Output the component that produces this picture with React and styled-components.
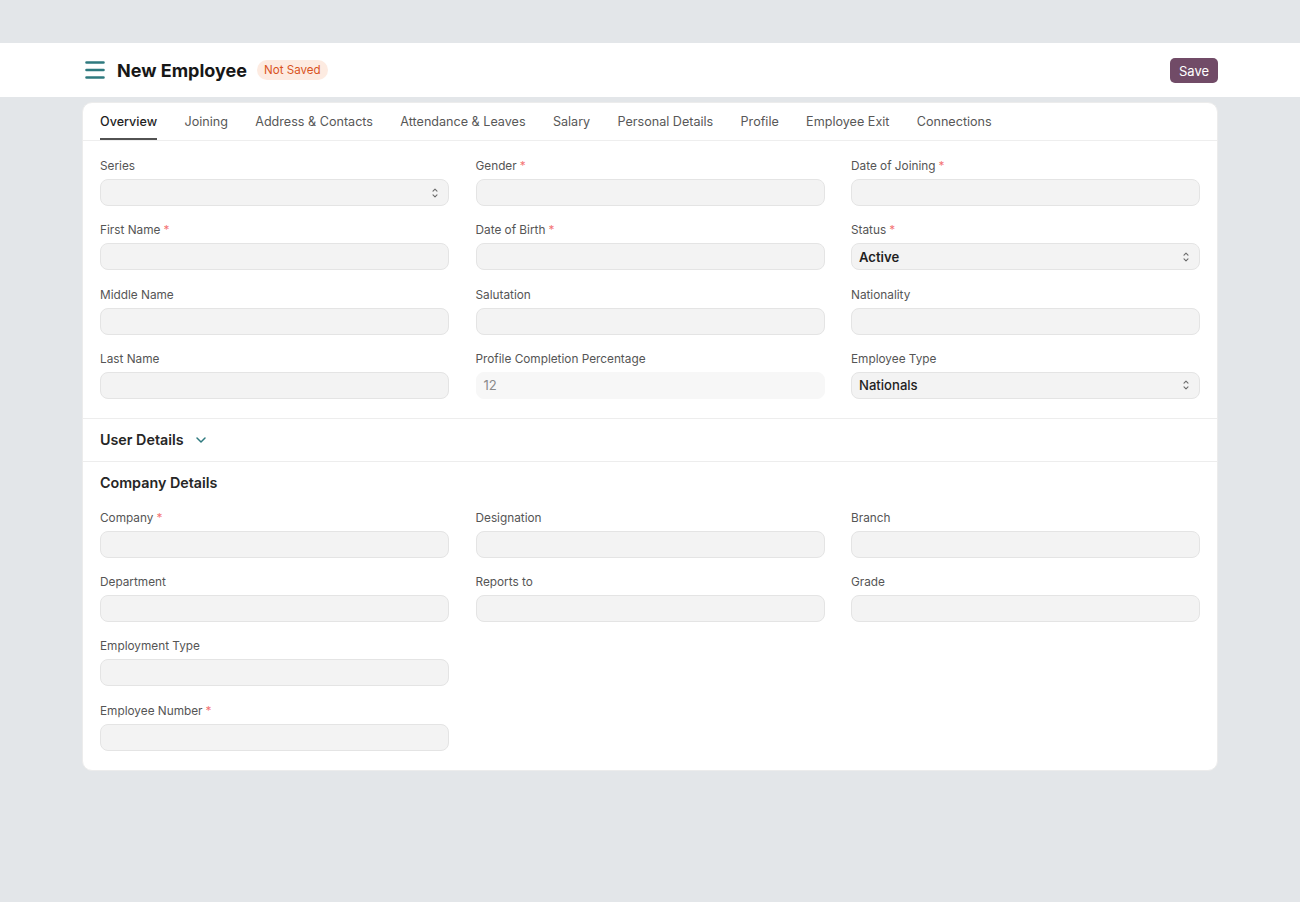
import styled, { createGlobalStyle } from "styled-components"

const GlobalStyle = createGlobalStyle`
  html, body {
    margin: 0;
    padding: 0;
    background: #e3e6e9;
    font-family: Inter, "Noto Sans", "Liberation Sans", sans-serif;
    -webkit-font-smoothing: antialiased;
  }
  * { box-sizing: border-box; }
`

const Page = styled.div`
  min-height: 902px;
  padding-top: 43px;
`

const HeaderBar = styled.header`
  background: #ffffff;
  height: 54px;
`

const Container = styled.div`
  width: 1136px;
  margin: 0 auto;
`

const HeaderInner = styled(Container)`
  height: 100%;
  display: flex;
  align-items: center;
  padding-left: 3px;
`

const MenuIcon = styled.svg`
  width: 20px;
  height: 20px;
  margin-right: 12px;
`

const Title = styled.h1`
  margin: 0;
  font-size: 18px;
  font-weight: 700;
  color: #171717;
`

const Badge = styled.span`
  margin-left: 10px;
  background: #fdebe1;
  color: #d9541e;
  font-size: 11.6px;
  font-weight: 400;
  padding: 3px 7px;
  border-radius: 999px;
`

const SaveButton = styled.button`
  margin-left: auto;
  background: #714b67;
  color: #fff;
  border: none;
  border-radius: 5px;
  font-family: inherit;
  font-size: 13px;
  font-weight: 400;
  height: 25px;
  width: 48px;
  padding: 0;
  margin-top: 1px;
`

const Card = styled(Container)`
  margin-top: 5px;
  background: #fff;
  border: 1px solid #ececec;
  border-radius: 10px;
  overflow: hidden;
`

const Tabs = styled.nav`
  display: flex;
  gap: 27.3px;
  padding: 0 17px;
  height: 38px;
  border-bottom: 1px solid #eeeeee;
`

const Tab = styled.div`
  display: flex;
  align-items: center;
  font-size: 12.6px;
  color: ${(p) => (p.active ? "#1f1f1f" : "#585858")};
  font-weight: ${(p) => (p.active ? 500 : 400)};
  border-bottom: 2px solid ${(p) => (p.active ? "#525252" : "transparent")};
  padding-top: 2px;
`

const Section = styled.section`
  padding: ${(p) => p.pad || "17px 17px 19px"};
  border-bottom: ${(p) => (p.last ? "none" : "1px solid #ededed")};
`

const SectionHead = styled.div`
  display: flex;
  align-items: center;
  gap: 10px;
  font-size: 14.3px;
  font-weight: 600;
  color: #262626;
  line-height: 20px;
  margin-bottom: ${(p) => (p.spaced ? "17px" : "0")};
`

const Grid = styled.div`
  display: grid;
  grid-template-columns: repeat(3, 349px);
  column-gap: 26.5px;
  row-gap: 16.3px;
`

const Field = styled.div`
  display: flex;
  flex-direction: column;
  grid-column: ${(p) => p.col || "auto"};
`

const Label = styled.label`
  font-size: 11.8px;
  line-height: 16px;
  color: #555555;
  margin-bottom: 5px;
`

const Req = styled.span`
  color: #f47575;
  margin-left: 3px;
`

const Input = styled.div`
  height: 27px;
  background: ${(p) => (p.readOnly ? "#f7f7f7" : "#f3f3f3")};
  border: 1px solid ${(p) => (p.readOnly ? "#f7f7f7" : "#e4e4e4")};
  border-radius: 8px;
  display: flex;
  align-items: center;
  padding: 0 7px 0 7px;
  font-size: 13.1px;
  color: ${(p) => (p.readOnly ? "#8a8a8a" : "#1f1f1f")};
  font-weight: ${(p) => p.weight || 400};
`

const Caret = styled.svg`
  margin-left: auto;
  width: 12px;
  height: 14px;
`

const SelectArrows = () => (
  <Caret viewBox="0 0 12 14" fill="none" stroke="#6b6b6b" strokeWidth="1.1" strokeLinecap="round" strokeLinejoin="round">
    <path d="M4 5.2 6 3.2 8 5.2" />
    <path d="M4 8.8 6 10.8 8 8.8" />
  </Caret>
)

const FormField = ({ label, required, value, select, readOnly, weight, col }) => (
  <Field col={col}>
    <Label>
      {label}
      {required && <Req>*</Req>}
    </Label>
    <Input readOnly={readOnly} weight={weight}>
      {value}
      {select && <SelectArrows />}
    </Input>
  </Field>
)

const tabs = [
  "Overview",
  "Joining",
  "Address & Contacts",
  "Attendance & Leaves",
  "Salary",
  "Personal Details",
  "Profile",
  "Employee Exit",
  "Connections",
]

export default function App() {
  return (
    <Page>
      <GlobalStyle />
      <HeaderBar>
        <HeaderInner>
          <MenuIcon viewBox="0 0 20 20" fill="none" stroke="#2f7a7f" strokeWidth="2.6" strokeLinecap="round">
            <path d="M1.5 2.5h17M1.5 10h17M1.5 17.5h17" />
          </MenuIcon>
          <Title>New Employee</Title>
          <Badge>Not Saved</Badge>
          <SaveButton>Save</SaveButton>
        </HeaderInner>
      </HeaderBar>

      <Card>
        <Tabs>
          {tabs.map((t, i) => (
            <Tab key={t} active={i === 0}>
              {t}
            </Tab>
          ))}
        </Tabs>

        <Section>
          <Grid>
            <FormField label="Series" select />
            <FormField label="Gender" required />
            <FormField label="Date of Joining" required />
            <FormField label="First Name" required />
            <FormField label="Date of Birth" required />
            <FormField label="Status" required select value="Active" weight={600} />
            <FormField label="Middle Name" />
            <FormField label="Salutation" />
            <FormField label="Nationality" />
            <FormField label="Last Name" />
            <FormField label="Profile Completion Percentage" readOnly value="12" />
            <FormField label="Employee Type" select value="Nationals" weight={500} />
          </Grid>
        </Section>

        <Section pad="11px 17px 11px">
          <SectionHead>
            User Details
            <svg width="14" height="14" viewBox="0 0 14 14" fill="none" stroke="#2f7a7f" strokeWidth="1.5" strokeLinecap="round" strokeLinejoin="round">
              <path d="M3 5l4 4 4-4" />
            </svg>
          </SectionHead>
        </Section>

        <Section pad="11px 17px 19px" last>
          <SectionHead spaced>Company Details</SectionHead>
          <Grid>
            <FormField label="Company" required />
            <FormField label="Designation" />
            <FormField label="Branch" />
            <FormField label="Department" />
            <FormField label="Reports to" />
            <FormField label="Grade" />
            <FormField label="Employment Type" col="1" />
            <FormField label="Employee Number" required col="1" />
          </Grid>
        </Section>
      </Card>
    </Page>
  )
}
